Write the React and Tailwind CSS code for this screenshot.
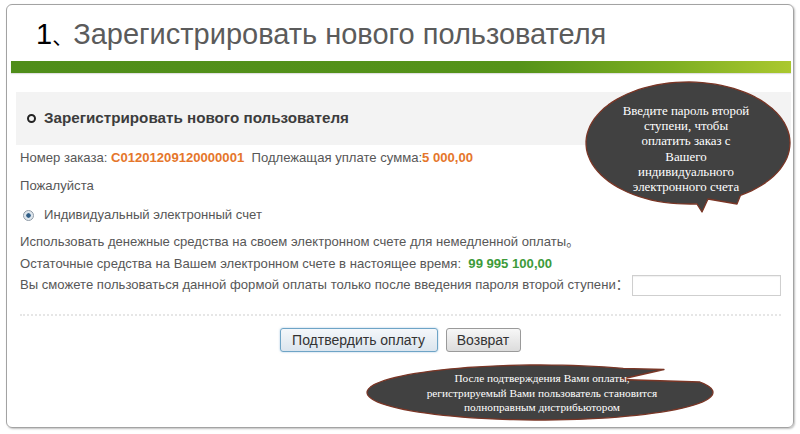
import React from "react";

const sans = { fontFamily: '"Liberation Sans", Arial, "Noto Sans CJK SC", sans-serif' };
const serif = { fontFamily: '"Liberation Serif", "Times New Roman", serif' };

// points along an ellipse, angles in degrees, increasing = clockwise on screen
function arcPoints(cx, cy, rx, ry, from, to, steps = 90) {
  const pts = [];
  for (let i = 0; i <= steps; i++) {
    const a = ((from + ((to - from) * i) / steps) * Math.PI) / 180;
    pts.push(`${(cx + rx * Math.cos(a)).toFixed(1)},${(cy + ry * Math.sin(a)).toFixed(1)}`);
  }
  return pts;
}

const topBubble = [
  ...arcPoints(688, 143, 102, 61, 85, 419),
  "737,204",
  "708,199",
  "702,212",
].join(" ");

const bottomBubble = [
  ...arcPoints(540, 392.5, 173, 27.5, -22.4, 298.8),
  "664,369.5",
  "620,379.5",
].join(" ");

function Callouts() {
  return (
    <>
      <svg
        className="absolute left-0 top-0 pointer-events-none"
        width="800"
        height="434"
        viewBox="0 0 800 434"
      >
        <polygon points={topBubble} fill="#414141" stroke="#7a3626" strokeWidth="1.3" strokeLinejoin="round" />
        <polygon points={bottomBubble} fill="#414141" stroke="#7a3626" strokeWidth="1.3" strokeLinejoin="round" />
      </svg>

      <div
        className="absolute left-[586px] top-[104px] w-[200px] text-center text-[12.9px] leading-[15.2px] text-white"
        style={serif}
      >
        Введите пароль второй
        <br />
        ступени, чтобы
        <br />
        оплатить заказ с
        <br />
        Вашего
        <br />
        индивидуального
        <br />
        электронного счета
      </div>

      <div
        className="absolute left-[392px] top-[371px] w-[300px] text-center text-[11.3px] leading-[14.5px] text-white"
        style={serif}
      >
        После подтверждения Вами оплаты,
        <br />
        регистрируемый Вами пользователь становится
        <br />
        полноправным дистрибьютором
      </div>
    </>
  );
}

export default function App() {
  return (
    <div className="relative w-[800px] h-[434px] overflow-hidden bg-white pt-[4px] pl-[6px]" style={sans}>
      <div className="w-[788px] h-[424px] border border-[#a3a3a3] rounded-[6px] shadow-[1px_1px_2px_rgba(0,0,0,0.25)] flex flex-col">
        {/* slide title */}
        <div className="pt-[13px] pl-[29px] h-[45px] text-[29px] leading-[32px] text-[#5b5b5b] whitespace-nowrap">
          <span className="text-black">1</span>
          <span className="text-black text-[21px]">、</span>Зарегистрировать нового пользователя
        </div>
        <div className="mt-[11px] ml-[4px] mr-[2px] h-[12px] bg-[linear-gradient(to_right,#4f8d1a_0%,#559319_65%,#7eaf22_85%,#abc82f_100%)] shadow-[0_1px_1px_rgba(0,0,0,0.12)]" />

        {/* form panel */}
        <div className="mt-[19px] ml-[9px] mr-[2px] h-[53px] bg-[#f3f3f3] flex items-center pl-[11px] gap-[8px]">
          <span className="w-[9px] h-[9px] rounded-full border-2 border-[#222]" />
          <span className="text-[15.2px] font-bold text-[#3c3c3c]">Зарегистрировать нового пользователя</span>
        </div>

        <div className="ml-[13px] mr-[12px] flex flex-col text-[13.1px] text-[#575757]">
          <div className="h-[26px] flex items-center whitespace-nowrap">
            Номер заказа:&nbsp;
            <span className="font-bold text-[#e5762b]">C01201209120000001</span>
            &nbsp;&nbsp;Подлежащая уплате сумма:
            <span className="font-bold text-[#e5762b]">5 000,00</span>
          </div>
          <div className="h-[30px] flex items-center">Пожалуйста</div>
          <div className="h-[28px] flex items-center">
            <span className="ml-[3px] w-[11px] h-[11px] rounded-full border border-[#8d99a5] bg-[radial-gradient(circle,#2f5d86_0%,#2f5d86_30%,#d9e2ea_40%,#eef2f5_100%)]" />
            <span className="ml-[10px]">Индивидуальный электронный счет</span>
          </div>
          <div className="h-[26px] flex items-center whitespace-nowrap">
            Использовать денежные средства на своем электронном счете для немедленной оплаты。
          </div>
          <div className="h-[18px] flex items-center whitespace-nowrap">
            Остаточные средства на Вашем электронном счете в настоящее время:&nbsp;&nbsp;
            <span className="font-bold text-[#3d9b3a]">99 995 100,00</span>
          </div>
          <div className="h-[24px] flex items-center whitespace-nowrap">
            <span>Вы сможете пользоваться данной формой оплаты только после введения пароля второй ступени：</span>
            <input
              type="password"
              className="ml-auto w-[149px] h-[21px] border border-[#cfcfcf] bg-white outline-none shadow-[inset_0_1px_1px_rgba(0,0,0,0.06)]"
            />
          </div>
          <div className="mt-[17px] border-t-2 border-dotted border-[#e6e6e6]" />
        </div>

        <div className="mt-[12px] flex justify-center gap-[8px] text-[14px] text-[#333]">
          <button className="w-[158px] h-[24px] rounded-[3px] border border-[#6ea4c6] bg-[linear-gradient(#f4f7fa,#dbe5ee)] shadow-[0_0_2px_rgba(90,150,200,0.6)]">
            Подтвердить оплату
          </button>
          <button className="w-[75px] h-[24px] rounded-[3px] border border-[#9a9a9a] bg-[linear-gradient(#f7f7f7,#dcdcdc)]">
            Возврат
          </button>
        </div>
      </div>

      <Callouts />
    </div>
  );
}
